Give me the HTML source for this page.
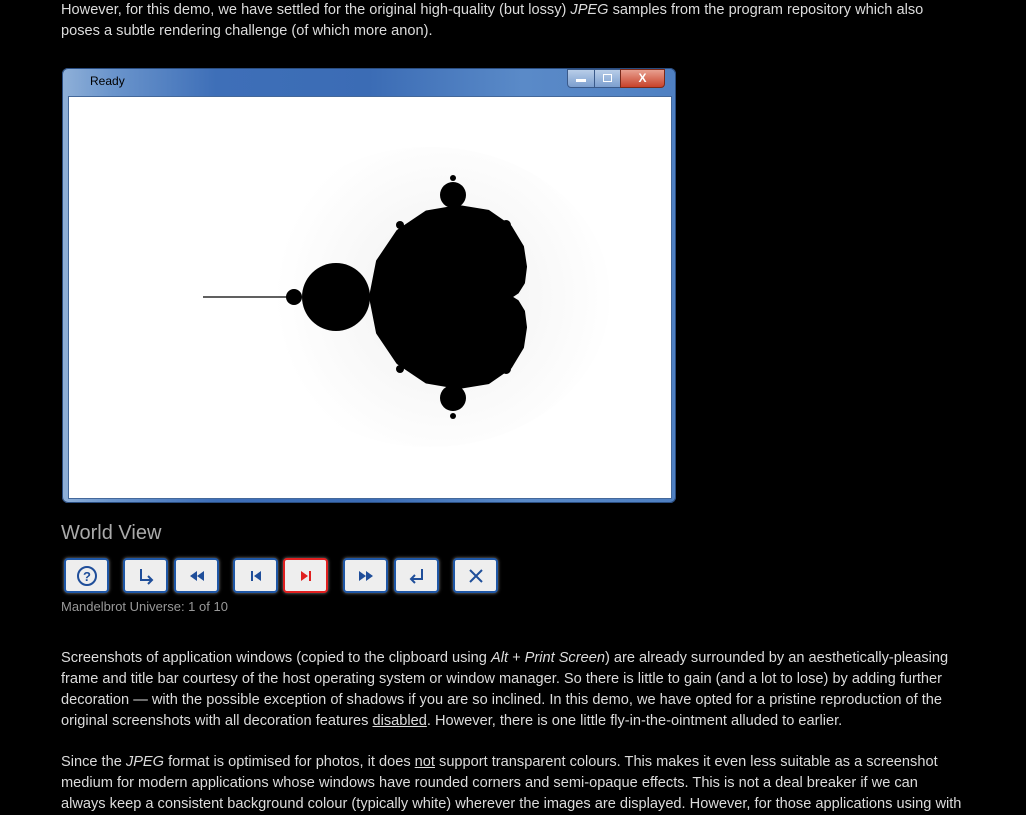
<!DOCTYPE html>
<html><head><style>
body{margin:0;background:#000;width:1026px;height:802px;overflow:hidden;position:relative;font-family:"Liberation Sans",sans-serif;color:#dcdcdc}
.p{position:absolute;left:61px;font-size:14.6px;line-height:21px;width:920px;white-space:nowrap}
.win{position:absolute;left:62px;top:68px;width:614px;height:435px;border-radius:6px;background:linear-gradient(90deg,#8fb0d8 0%,#6b95cc 8%,#3e6fb8 25%,#3b6cb5 50%,#5a8ac8 75%,#4f80c2 100%);box-shadow:0 0 0 1px #2a4d80 inset}
.cl{position:absolute;left:6px;top:28px;width:602px;height:401px;background:#fff;border:1px solid #44689a}
.btn{position:absolute;top:558px;width:41px;height:31px;background:#eee;border:2px solid #1f57a6;border-radius:4px;box-shadow:0 0 3px #888;color:#1f4e9a;display:flex;align-items:center;justify-content:center}
</style></head><body>
<div class="p" style="top:0">However, for this demo, we have settled for the original high-quality (but lossy) <i>JPEG</i> samples from the program repository which also<br>poses a subtle rendering challenge (of which more anon).</div>
<div class="win">
<div style="position:absolute;left:28px;top:6px;font-size:12px;color:#000">Ready</div>
<div style="position:absolute;left:505px;top:1px;width:26px;height:17px;background:linear-gradient(#b8cde8,#7c9fcf);border:1px solid #3a5a8a;border-radius:0 0 0 4px"><div style="margin:9px 8px;width:10px;height:3px;background:#fff"></div></div>
<div style="position:absolute;left:532px;top:1px;width:25px;height:17px;background:linear-gradient(#b8cde8,#7c9fcf);border:1px solid #3a5a8a"><div style="margin:4px 8px;width:7px;height:6px;border:1px solid #fff"></div></div>
<div style="position:absolute;left:558px;top:1px;width:43px;height:17px;background:linear-gradient(#e8a090,#c8422a);border:1px solid #7a2a1a;border-radius:0 0 4px 0;color:#fff;font-weight:bold;font-size:12px;text-align:center;line-height:17px">X</div>
<div class="cl">
<svg width="602" height="401" viewBox="69 97 602 401">
<defs><radialGradient id="g" cx="445" cy="297" r="170" gradientUnits="userSpaceOnUse"><stop offset="0" stop-color="#f0f0f0"/><stop offset="1" stop-color="#fff"/></radialGradient></defs>
<ellipse cx="430" cy="297" rx="180" ry="150" fill="url(#g)"/>
<path d="M508,297 L511,296 517,292 523,282.5 525,266.7 522,246.9 510,227 488.2,211.9 458.5,207 426.5,212.5 398,231.7 378,261.4 371,297 378,332.6 398,362.3 426.5,381.5 458.5,387 488.2,382.1 510,367 522,347.1 525,327.3 523,311.5 517,301.7 511,298Z" fill="#000" stroke="#000" stroke-width="4" stroke-linejoin="round"/>
<circle cx="336" cy="297" r="34" fill="#000"/>
<circle cx="294" cy="297" r="8" fill="#000"/>
<circle cx="453" cy="195" r="13" fill="#000"/>
<circle cx="453" cy="398" r="13" fill="#000"/>
<circle cx="506" cy="225" r="5" fill="#000"/><circle cx="506" cy="369" r="5" fill="#000"/>
<circle cx="400" cy="225" r="4" fill="#000"/><circle cx="400" cy="369" r="4" fill="#000"/>
<circle cx="453" cy="178" r="3" fill="#000"/><circle cx="453" cy="416" r="3" fill="#000"/>
<line x1="203" y1="297" x2="290" y2="297" stroke="#000" stroke-width="1.2"/>
</svg></div></div>
<div style="position:absolute;left:61px;top:522px;font-size:20px;color:#aaa">World View</div>
<div class="btn" style="left:64px"><svg width="22" height="22"><circle cx="11" cy="11" r="9" fill="none" stroke="#1f4e9a" stroke-width="2"/><text x="11" y="16" font-size="13" font-weight="bold" text-anchor="middle" fill="#1f4e9a" font-family="Liberation Sans">?</text></svg></div>
<div class="btn" style="left:123px"><svg width="20" height="20"><path d="M5 3V14H16M12 10L16 14 12 18" fill="none" stroke="#1f4e9a" stroke-width="2"/></svg></div>
<div class="btn" style="left:174px"><svg width="20" height="20"><path d="M10 5V15L3 10ZM17 5V15L10 10Z" fill="#1f4e9a"/></svg></div>
<div class="btn" style="left:233px"><svg width="20" height="20"><path d="M5 5H7V15H5ZM15 5V15L8 10Z" fill="#1f4e9a"/></svg></div>
<div class="btn" style="left:283px;border-color:#e02020"><svg width="20" height="20"><path d="M5 5V15L12 10ZM13 5H15V15H13Z" fill="#e02020"/></svg></div>
<div class="btn" style="left:343px"><svg width="20" height="20"><path d="M3 5V15L10 10ZM10 5V15L17 10Z" fill="#1f4e9a"/></svg></div>
<div class="btn" style="left:394px"><svg width="20" height="20"><path d="M15 3V13H4M8 9L4 13 8 17" fill="none" stroke="#1f4e9a" stroke-width="2"/></svg></div>
<div class="btn" style="left:453px"><svg width="20" height="20"><path d="M4 4L16 16M16 4L4 16" stroke="#1f4e9a" stroke-width="2"/></svg></div>
<div style="position:absolute;left:61px;top:599px;font-size:13px;color:#999">Mandelbrot Universe: 1 of 10</div>
<div class="p" style="top:648px">Screenshots of application windows (copied to the clipboard using <i>Alt + Print Screen</i>) are already surrounded by an aesthetically-pleasing<br>frame and title bar courtesy of the host operating system or window manager. So there is little to gain (and a lot to lose) by adding further<br>decoration — with the possible exception of shadows if you are so inclined. In this demo, we have opted for a pristine reproduction of the<br>original screenshots with all decoration features <u>disabled</u>. However, there is one little fly-in-the-ointment alluded to earlier.</div>
<div class="p" style="top:752px">Since the <i>JPEG</i> format is optimised for photos, it does <u>not</u> support transparent colours. This makes it even less suitable as a screenshot<br>medium for modern applications whose windows have rounded corners and semi-opaque effects. This is not a deal breaker if we can<br>always keep a consistent background colour (typically white) wherever the images are displayed. However, for those applications using with</div>
</body></html>
